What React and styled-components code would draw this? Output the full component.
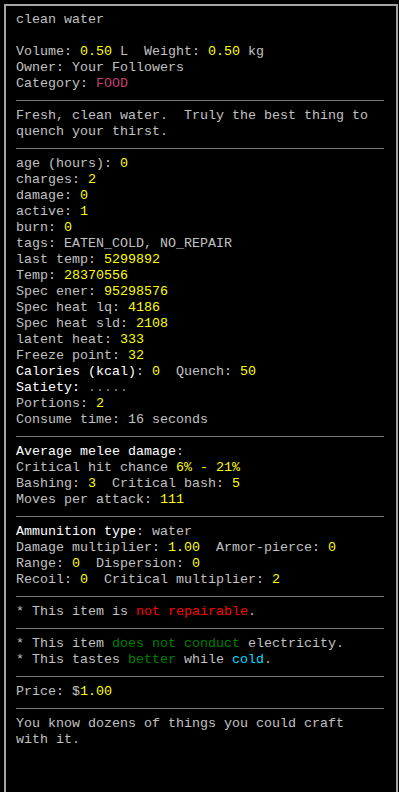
import React from 'react';
import styled, { createGlobalStyle } from 'styled-components';

const GlobalStyle = createGlobalStyle`
  html, body {
    margin: 0;
    padding: 0;
    background: #000;
  }
  body {
    height: 792px;
    overflow: hidden;
  }
`;

// curses-like palette
const colors = {
  gray: '#c0c0c0',
  white: '#ffffff',
  yellow: '#ffff00',
  pink: '#c04070',
  red: '#ff0000',
  green: '#008000',
  cyan: '#00dcff',
  dim: '#8c8c8c',
};

const Screen = styled.div`
  padding: 4px 0 0 4px;
  height: 788px;
  box-sizing: border-box;
`;

const Panel = styled.div`
  width: 394px;
  height: 788px;
  box-sizing: border-box;
  border: 2px solid #a4a4a4;
  border-bottom: none;
  padding: 6px 12px 0 10px;
  font-family: "Liberation Mono", "DejaVu Sans Mono", monospace;
  font-size: 13.333px;
  line-height: 16px;
  color: ${colors.gray};
`;

const Line = styled.div`
  height: 16px;
  white-space: pre;
`;

const Blank = styled.div`
  height: 16px;
`;

const Rule = styled.div`
  height: 16px;
  display: flex;
  align-items: center;
  &::after {
    content: '';
    flex: 1;
    height: 1px;
    background: #7c7c7c;
  }
`;

const C = styled.span`
  color: ${(p) => colors[p.$c] || colors.gray};
`;

const Y = ({ children }) => <C $c="yellow">{children}</C>;

const Stat = ({ label, value }) => (
  <Line>
    {label}: <Y>{value}</Y>
  </Line>
);

const stats = [
  ['age (hours)', '0'],
  ['charges', '2'],
  ['damage', '0'],
  ['active', '1'],
  ['burn', '0'],
];

const temps = [
  ['last temp', '5299892'],
  ['Temp', '28370556'],
  ['Spec ener', '95298576'],
  ['Spec heat lq', '4186'],
  ['Spec heat sld', '2108'],
  ['latent heat', '333'],
  ['Freeze point', '32'],
];

export default function App() {
  return (
    <>
      <GlobalStyle />
      <Screen>
        <Panel>
          <Line>clean water</Line>
          <Blank />
          <Line>
            Volume: <Y>0.50</Y> L  Weight: <Y>0.50</Y> kg
          </Line>
          <Line>Owner: Your Followers</Line>
          <Line>
            Category: <C $c="pink">FOOD</C>
          </Line>
          <Rule />
          <Line>Fresh, clean water.  Truly the best thing to</Line>
          <Line>quench your thirst.</Line>
          <Rule />
          {stats.map(([l, v]) => (
            <Stat key={l} label={l} value={v} />
          ))}
          <Line>tags: EATEN_COLD, NO_REPAIR</Line>
          {temps.map(([l, v]) => (
            <Stat key={l} label={l} value={v} />
          ))}
          <Line>
            <C $c="white">Calories (kcal)</C>: <Y>0</Y>  Quench: <Y>50</Y>
          </Line>
          <Line>
            <C $c="white">Satiety:</C> <C $c="dim">.....</C>
          </Line>
          <Stat label="Portions" value="2" />
          <Line>Consume time: 16 seconds</Line>
          <Rule />
          <Line>
            <C $c="white">Average melee damage</C>:
          </Line>
          <Line>
            Critical hit chance <Y>6% - 21%</Y>
          </Line>
          <Line>
            Bashing: <Y>3</Y>  Critical bash: <Y>5</Y>
          </Line>
          <Stat label="Moves per attack" value="111" />
          <Rule />
          <Line>
            <C $c="white">Ammunition type</C>: water
          </Line>
          <Line>
            Damage multiplier: <Y>1.00</Y>  Armor-pierce: <Y>0</Y>
          </Line>
          <Line>
            Range: <Y>0</Y>  Dispersion: <Y>0</Y>
          </Line>
          <Line>
            Recoil: <Y>0</Y>  Critical multiplier: <Y>2</Y>
          </Line>
          <Rule />
          <Line>
            * This item is <C $c="red">not repairable</C>.
          </Line>
          <Rule />
          <Line>
            * This item <C $c="green">does not conduct</C> electricity.
          </Line>
          <Line>
            * This tastes <C $c="green">better</C> while <C $c="cyan">cold</C>.
          </Line>
          <Rule />
          <Line>
            Price: $<Y>1.00</Y>
          </Line>
          <Rule />
          <Line>You know dozens of things you could craft</Line>
          <Line>with it.</Line>
        </Panel>
      </Screen>
    </>
  );
}
